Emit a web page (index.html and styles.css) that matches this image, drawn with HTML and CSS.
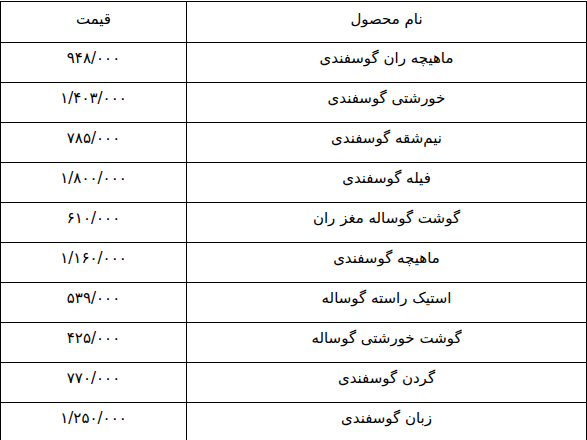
FILE: index.html
```html
<!DOCTYPE html>
<html lang="fa" dir="rtl">
<head>
<meta charset="utf-8">
<title>قیمت گوشت</title>
<link rel="stylesheet" href="styles.css">
</head>
<body>
<table class="price-table">
  <colgroup>
    <col class="col-name">
    <col class="col-price">
  </colgroup>
  <thead>
    <tr>
      <th>نام محصول</th>
      <th>قیمت</th>
    </tr>
  </thead>
  <tbody>
    <tr><td>ماهیچه ران گوسفندی</td><td>۹۴۸/۰۰۰</td></tr>
    <tr><td>خورشتی گوسفندی</td><td>۱/۴۰۳/۰۰۰</td></tr>
    <tr><td>نیم‌شقه گوسفندی</td><td>۷۸۵/۰۰۰</td></tr>
    <tr><td>فیله گوسفندی</td><td>۱/۸۰۰/۰۰۰</td></tr>
    <tr><td>گوشت گوساله مغز ران</td><td>۶۱۰/۰۰۰</td></tr>
    <tr><td>ماهیچه گوسفندی</td><td>۱/۱۶۰/۰۰۰</td></tr>
    <tr><td>استیک راسته گوساله</td><td>۵۳۹/۰۰۰</td></tr>
    <tr><td>گوشت خورشتی گوساله</td><td>۴۲۵/۰۰۰</td></tr>
    <tr><td>گردن گوسفندی</td><td>۷۷۰/۰۰۰</td></tr>
    <tr><td>زبان گوسفندی</td><td>۱/۲۵۰/۰۰۰</td></tr>
  </tbody>
</table>
</body>
</html>
```

FILE: styles.css
```css
html, body {
  margin: 0;
  padding: 0;
  background: #ffffff;
}
body {
  padding: 1px 0 0 1px;
  font-family: "DejaVu Sans", sans-serif;
  color: #000;
}
.price-table {
  border-collapse: collapse;
  width: 586px;
  table-layout: fixed;
}
.col-name {
  width: 400px;
}
.col-price {
  width: 186px;
}
.price-table th,
.price-table td {
  border: 1px solid #000;
  font-weight: normal;
  font-size: 15px;
  line-height: 18px;
  text-align: center;
  vertical-align: top;
  padding: 6px 2px 0;
  height: 33px;
  box-sizing: content-box;
}
.price-table th {
  padding-top: 8px;
  height: 32px;
}
```
